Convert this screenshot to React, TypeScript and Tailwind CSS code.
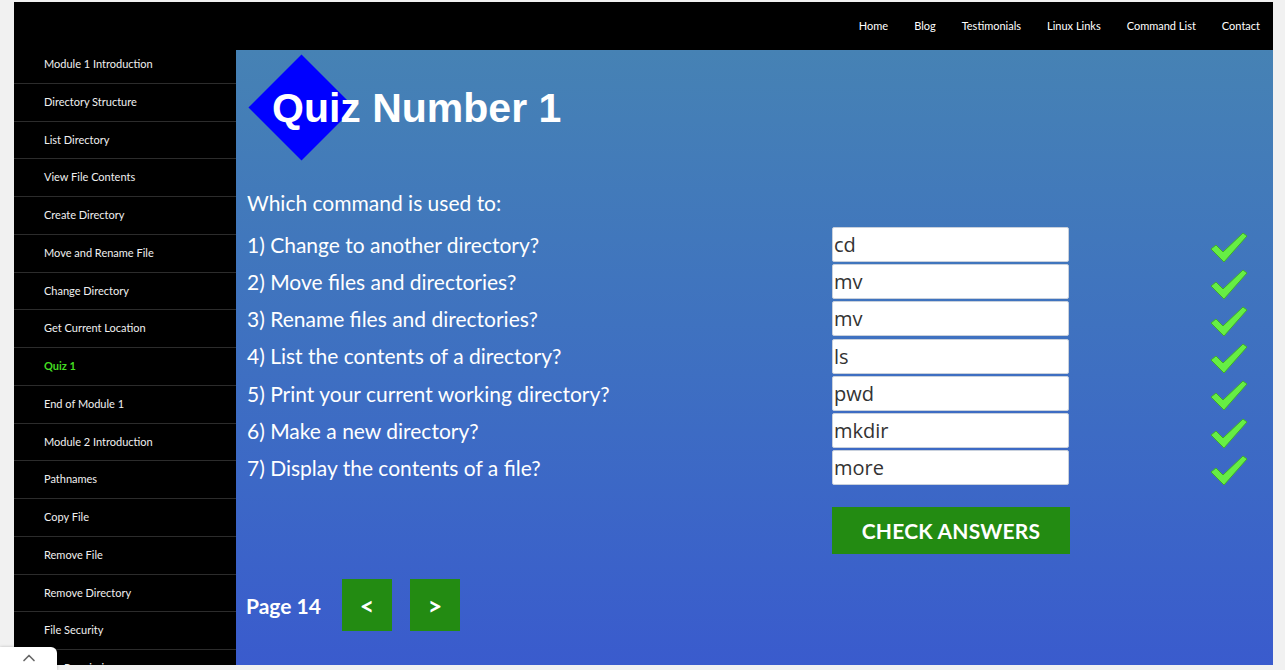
import { ChevronUp } from 'lucide-react';

const navLinks = ['Home', 'Blog', 'Testimonials', 'Linux Links', 'Command List', 'Contact'];

const lessons = [
  'Module 1 Introduction',
  'Directory Structure',
  'List Directory',
  'View File Contents',
  'Create Directory',
  'Move and Rename File',
  'Change Directory',
  'Get Current Location',
  'Quiz 1',
  'End of Module 1',
  'Module 2 Introduction',
  'Pathnames',
  'Copy File',
  'Remove File',
  'Remove Directory',
  'File Security',
  'File Permissions',
];

const questions = [
  { q: '1) Change to another directory?', a: 'cd' },
  { q: '2) Move files and directories?', a: 'mv' },
  { q: '3) Rename files and directories?', a: 'mv' },
  { q: '4) List the contents of a directory?', a: 'ls' },
  { q: '5) Print your current working directory?', a: 'pwd' },
  { q: '6) Make a new directory?', a: 'mkdir' },
  { q: '7) Display the contents of a file?', a: 'more' },
];

const Tick = () => (
  <svg width="38" height="32" viewBox="0 0 38 32">
    <path
      d="M1 18 L6 14 L13 21 L33 2 L37 5 L14 31 Z"
      fill="#66ee44"
      stroke="#3fae2a"
      strokeWidth="1"
      strokeLinejoin="round"
    />
  </svg>
);

export default function App() {
  return (
    <div className="w-[1285px] h-[670px] overflow-hidden bg-[#f1f1f1] pt-[2px] pl-[14px] pr-[12px] relative font-['Lato','Open_Sans',sans-serif]">
      <div className="h-[663px] bg-black flex flex-col overflow-hidden">
        {/* Top nav */}
        <div className="h-[48px] shrink-0 flex items-center justify-end gap-[26px] pr-[13px] text-[11px] text-white">
          {navLinks.map((l) => (
            <a key={l} className="cursor-pointer">{l}</a>
          ))}
        </div>

        <div className="flex flex-1 min-h-0">
          {/* Sidebar */}
          <div className="w-[222px] shrink-0 -mt-[4px]">
            {lessons.map((l) => (
              <div
                key={l}
                className={`h-[37.75px] flex items-center pl-[30px] border-b border-[#2c2c2c] text-[11px] ${
                  l === 'Quiz 1' ? 'text-[#44dd22] font-bold' : 'text-[#f0f0f0]'
                }`}
              >
                {l}
              </div>
            ))}
          </div>

          {/* Main content */}
          <div className="flex-1 bg-gradient-to-b from-[#4682b4] to-[#3a5bcd] pl-[11px]">
            <div className="relative h-[134px] flex items-center">
              <div className="absolute left-[17px] top-[20px] w-[75px] h-[75px] bg-[#0000ff] rotate-45" />
              <h1 className="relative ml-[25px] -mt-[16px] font-['Liberation_Sans',Arial,sans-serif] font-bold text-[41px] text-white">
                Quiz Number 1
              </h1>
            </div>

            <div className="h-[37px] flex items-center text-[21px] text-white">Which command is used to:</div>

            <div className="mt-[5px]">
              {questions.map((item, i) => (
                <div key={i} className="h-[37.2px] flex items-center">
                  <div className="w-[585px] text-[21px] text-white">{item.q}</div>
                  <input
                    readOnly
                    value={item.a}
                    className="w-[237px] h-[35px] bg-white border border-[#c8d0dc] rounded-[2px] px-[1px] text-[20px] text-[#333] font-['Open_Sans',sans-serif] outline-none"
                  />
                  <div className="ml-[141px] pt-[4px]">
                    <Tick />
                  </div>
                </div>
              ))}
            </div>

            <div className="pl-[585px] mt-[21px]">
              <button className="w-[238px] h-[47px] bg-[#238b12] text-white font-bold text-[21px] tracking-[0.2px]">
                CHECK ANSWERS
              </button>
            </div>

            <div className="flex items-center mt-[25px]">
              <span className="-ml-[1px] text-white font-bold text-[21px] w-[96px]">Page 14</span>
              <button className="w-[50px] h-[52px] bg-[#238b12] text-white font-bold text-[25px]">&lt;</button>
              <button className="ml-[18px] w-[50px] h-[52px] bg-[#238b12] text-white font-bold text-[25px]">&gt;</button>
            </div>
          </div>
        </div>
      </div>

      {/* scroll-to-top tab */}
      <div className="absolute left-0 bottom-0 w-[57px] h-[23px] bg-white rounded-tr-[6px] shadow-[0_0_3px_rgba(0,0,0,0.25)] flex items-start justify-center pt-[1px]">
        <ChevronUp className="w-[20px] h-[20px] text-[#666]" strokeWidth={2} />
      </div>
    </div>
  );
}
